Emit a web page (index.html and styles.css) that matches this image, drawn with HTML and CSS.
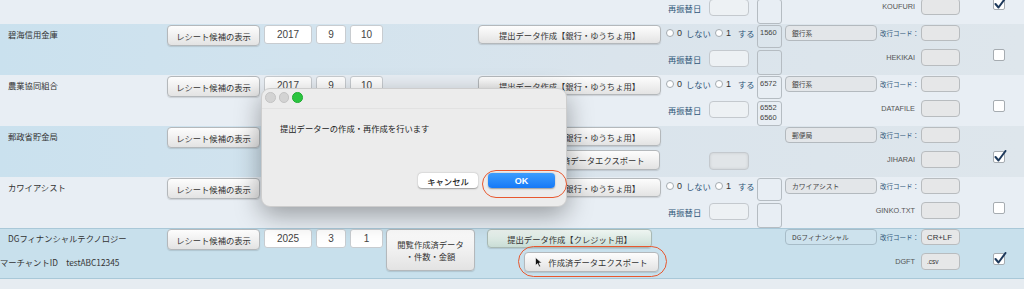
FILE: index.html
```html
<!doctype html>
<html lang="ja">
  <head>
    <meta charset="UTF-8" />
    <meta name="viewport" content="width=device-width, initial-scale=1.0" />
    <title>提出データ作成</title>
    <link rel="stylesheet" href="styles.css">
  </head>
  <body>
    <div class="sheet">

      <!-- 前の行（下半分のみ表示） -->
      <div class="record first">
        <div class="refund r2"><span class="refund-label">再振替日</span><span class="refund-field"></span></div>
        <div class="box r2"></div>
        <div class="fname r2">KOUFURI</div>
        <div class="code r2"></div>
        <div class="check r2 on"><svg viewBox="0 0 14 14"><path d="M2.5 7 L5.5 10.5 L12.5 1" /></svg></div>
      </div>

      <!-- 碧海信用金庫 -->
      <div class="record shade">
        <div class="name">碧海信用金庫</div>
        <button class="btn receipt">レシート候補の表示</button>
        <div class="field year">2017</div>
        <div class="field month">9</div>
        <div class="field day">10</div>
        <button class="btn submit">提出データ作成【銀行・ゆうちょ用】</button>
        <div class="radios">
          <span class="dot"></span><span class="num">0</span><span>しない</span>
          <span class="dot"></span><span class="num">1</span><span class="wide">する</span>
        </div>
        <div class="box">1560</div>
        <div class="cat">銀行系</div>
        <div class="crlf-label">改行コード：</div>
        <div class="code"></div>

        <div class="refund r2"><span class="refund-label">再振替日</span><span class="refund-field"></span></div>
        <div class="box r2"></div>
        <div class="fname r2">HEKIKAI</div>
        <div class="code r2"></div>
        <div class="check r2"></div>
      </div>

      <!-- 農業協同組合 -->
      <div class="record">
        <div class="name">農業協同組合</div>
        <button class="btn receipt">レシート候補の表示</button>
        <div class="field year">2017</div>
        <div class="field month">9</div>
        <div class="field day">10</div>
        <button class="btn submit">提出データ作成【銀行・ゆうちょ用】</button>
        <div class="radios">
          <span class="dot"></span><span class="num">0</span><span>しない</span>
          <span class="dot"></span><span class="num">1</span><span class="wide">する</span>
        </div>
        <div class="box">6572</div>
        <div class="cat">銀行系</div>
        <div class="crlf-label">改行コード：</div>
        <div class="code"></div>

        <div class="refund r2"><span class="refund-label">再振替日</span><span class="refund-field"></span></div>
        <div class="box r2">6552<br>6560</div>
        <div class="fname r2">DATAFILE</div>
        <div class="code r2"></div>
        <div class="check r2"></div>
      </div>

      <!-- 郵政省貯金局 -->
      <div class="record shade">
        <div class="name">郵政省貯金局</div>
        <button class="btn receipt">レシート候補の表示</button>
        <button class="btn submit">提出データ作成【銀行・ゆうちょ用】</button>
        <div class="cat">郵便局</div>
        <div class="crlf-label">改行コード：</div>
        <div class="code"></div>

        <button class="btn export plain r2">作成済データエクスポート</button>
        <div class="refund r2"><span class="refund-field blank"></span></div>
        <div class="fname r2">JIHARAI</div>
        <div class="code r2"></div>
        <div class="check r2 on"><svg viewBox="0 0 14 14"><path d="M2.5 7 L5.5 10.5 L12.5 1" /></svg></div>
      </div>

      <!-- カワイアシスト -->
      <div class="record">
        <div class="name">カワイアシスト</div>
        <button class="btn receipt">レシート候補の表示</button>
        <button class="btn submit">提出データ作成【銀行・ゆうちょ用】</button>
        <div class="radios">
          <span class="dot"></span><span class="num">0</span><span>しない</span>
          <span class="dot"></span><span class="num">1</span><span class="wide">する</span>
        </div>
        <div class="box"></div>
        <div class="cat">カワイアシスト</div>
        <div class="crlf-label">改行コード：</div>
        <div class="code"></div>

        <div class="refund r2"><span class="refund-label">再振替日</span><span class="refund-field"></span></div>
        <div class="box r2"></div>
        <div class="fname r2">GINKO.TXT</div>
        <div class="code r2"></div>
        <div class="check r2"></div>
      </div>

      <!-- DGフィナンシャルテクノロジー -->
      <div class="record credit">
        <div class="name">DGフィナンシャルテクノロジー</div>
        <div class="merchant r2">マーチャントID　testABC12345</div>
        <button class="btn receipt">レシート候補の表示</button>
        <div class="field year">2025</div>
        <div class="field month">3</div>
        <div class="field day">1</div>
        <button class="btn view">閲覧作成済データ<br>・件数・金額</button>
        <button class="btn submit card">提出データ作成【クレジット用】</button>
        <div class="cat blue">DGフィナンシャル</div>
        <div class="crlf-label">改行コード：</div>
        <div class="code">CR+LF</div>

        <button class="btn export r2">
          <svg class="cursor" viewBox="0 0 8 11"><path d="M0.5 0.5 L0.5 8.5 L2.6 6.6 L4.1 10 L5.5 9.3 L4 6 L6.8 6 Z" /></svg>
          作成済データエクスポート
        </button>
        <div class="fname r2">DGFT</div>
        <div class="code r2 small">.csv</div>
        <div class="check r2 on"><svg viewBox="0 0 14 14"><path d="M2.5 7 L5.5 10.5 L12.5 1" /></svg></div>
      </div>

      <div class="footer"></div>

      <!-- 確認ダイアログ -->
      <div class="dialog">
        <div class="titlebar">
          <span class="light"></span>
          <span class="light"></span>
          <span class="light green"></span>
        </div>
        <p class="message">提出データーの作成・再作成を行います</p>
        <div class="actions">
          <button class="dlg-btn">キャンセル</button>
          <button class="dlg-btn ok">OK</button>
        </div>
      </div>

      <!-- 注目の赤丸 -->
      <div class="mark mark-ok"></div>
      <div class="mark mark-export"></div>
    </div>
  </body>
</html>
```

FILE: styles.css
```css
body {
  margin: 0;
  overflow: hidden;
  background-color: #e7edf2;
  font-family: "Noto Sans CJK JP", "Liberation Sans", sans-serif;
  color: #333;
}
.sheet {
  display: flow-root;
  position: relative;
  width: 1024px;
}
.record {
  display: grid;
  grid-template-columns: 167px 97px 52px 34px 36px 92px 186px 93px 28px 93px 43px 72px 31px;
  grid-template-rows: 25px 26px;
  align-items: start;
  background-color: #e8eef4;
}
.record.first {
  margin-top: -27px;
}
.record.shade {
  background: linear-gradient(90deg, #cae1ee 0%, #d2e3ee 30%, #dae4ec 60%, #dee6ec 100%);
}
.record.credit {
  background-color: #c8e0ec;
  box-shadow: inset 0 1px #a9c8d8, inset 0 -1px #a9c8d8;
}
.r2 {
  grid-row: 2;
}
.footer {
  height: 20px;
  background-color: #e6ecf1;
}

/* 左の名前 */
.name {
  grid-column: 1;
  grid-row: 1;
  padding: 4px 0 0 8px;
  font-size: 8.3px;
  line-height: 12px;
  color: #333;
  white-space: nowrap;
}
.merchant {
  grid-column: 1 / 3;
  padding-top: 3px;
  font-size: 8.3px;
  line-height: 12px;
  white-space: nowrap;
}

/* ボタン */
.btn {
  box-sizing: border-box;
  display: flex;
  align-items: center;
  justify-content: center;
  padding: 0;
  border: 1px solid #b4b8bb;
  border-radius: 4px;
  background: linear-gradient(#fdfdfd, #efefef 55%, #e3e3e3);
  box-shadow: 0 1px 1px rgba(0, 0, 0, 0.12);
  font-family: "Noto Sans CJK JP", sans-serif;
  font-size: 8.3px;
  line-height: 12px;
  color: #333;
  white-space: nowrap;
}
.receipt {
  grid-column: 2;
  grid-row: 1;
  width: 93px;
  height: 21px;
  margin-top: 1px;
}
.submit {
  grid-column: 7;
  grid-row: 1;
  width: 183px;
  height: 19px;
  margin-top: 1px;
}
.submit.card {
  width: 165px;
  margin-left: 9px;
  background: linear-gradient(#eef5f1, #dbe9e3 55%, #c9ddd5);
  border-color: #a9b9b4;
}
.view {
  grid-column: 6;
  grid-row: 1 / 3;
  width: 89px;
  height: 42px;
  margin-top: 1px;
}
.export {
  grid-column: 7;
  width: 135px;
  height: 20px;
  margin-top: -1px;
  margin-left: 46px;
  gap: 5px;
}
.export.plain {
  width: 130px;
  margin-left: 52px;
}
.cursor {
  width: 8px;
  height: 11px;
}
.cursor path {
  fill: #111;
  stroke: #fff;
  stroke-width: 0.6;
}

/* 日付 */
.field {
  box-sizing: border-box;
  display: flex;
  align-items: center;
  justify-content: center;
  height: 19px;
  margin-top: 1px;
  background-color: #fff;
  border: 1px solid #c8ccd0;
  border-radius: 3px;
  font-family: "Liberation Sans", sans-serif;
  font-size: 10px;
  color: #444;
}
.year {
  grid-column: 3;
  width: 48px;
}
.month {
  grid-column: 4;
  width: 30px;
}
.day {
  grid-column: 5;
  width: 33px;
}

/* ラジオ */
.radios {
  grid-column: 8;
  grid-row: 1;
  display: flex;
  align-items: center;
  margin-top: 3px;
  padding-left: 2px;
  height: 12px;
  font-size: 8.3px;
  color: #2f5678;
  white-space: nowrap;
}
.dot {
  box-sizing: border-box;
  width: 8px;
  height: 8px;
  border: 1px solid #a3aab0;
  border-radius: 50%;
  background-color: #fff;
  margin-right: 3px;
}
.num {
  font-family: "Liberation Sans", sans-serif;
  font-size: 9px;
  color: #333;
  margin-right: 4px;
}
.radios span:nth-child(3) {
  margin-right: 4px;
}
.wide {
  margin-left: 3px;
}

/* 番号の枠 */
.box {
  grid-column: 9;
  grid-row: 1;
  box-sizing: border-box;
  width: 25px;
  height: 23px;
  margin-top: 1px;
  padding: 2px 0 0 2px;
  border: 1px solid #b5bcc2;
  border-radius: 3px;
  font-family: "Liberation Sans", sans-serif;
  font-size: 7.5px;
  line-height: 10px;
  color: #444;
}
.box.r2 {
  grid-row: 2;
  height: 25px;
  padding-top: 1px;
}

/* 種別 */
.cat {
  grid-column: 10;
  grid-row: 1;
  box-sizing: border-box;
  display: flex;
  align-items: center;
  width: 92px;
  height: 16px;
  margin-top: 1px;
  padding-left: 6px;
  border: 1px solid #b3b9be;
  border-radius: 4px;
  background-color: #e3e6e9;
  font-size: 6.8px;
  color: #444;
  white-space: nowrap;
}
.cat.blue {
  background-color: #cde2ed;
  border-color: #a7bcc8;
}
.crlf-label {
  grid-column: 11;
  grid-row: 1;
  margin-top: 4px;
  padding-left: 2px;
  font-size: 6.5px;
  line-height: 10px;
  color: #2f5678;
  white-space: nowrap;
}
.code {
  grid-column: 12;
  grid-row: 1;
  box-sizing: border-box;
  display: flex;
  align-items: center;
  width: 39px;
  height: 16px;
  margin-top: 1px;
  padding-left: 5px;
  border: 1px solid #b8bcbf;
  border-radius: 4px;
  background-color: #e6e7e8;
  font-family: "Liberation Sans", sans-serif;
  font-size: 7.8px;
  color: #333;
}
.code.r2 {
  grid-row: 2;
  height: 17px;
  margin-top: 0;
}
.code.small {
  font-size: 6.5px;
}
.fname {
  grid-column: 10 / 12;
  text-align: right;
  padding-right: 6px;
  margin-top: 4px;
  font-family: "Liberation Sans", sans-serif;
  font-size: 7.3px;
  line-height: 10px;
  color: #555;
}

/* 再振替日 */
.refund {
  grid-column: 8;
  display: flex;
  align-items: center;
  margin-top: 1px;
  height: 17px;
}
.refund-label {
  padding-left: 4px;
  width: 41px;
  font-size: 8.3px;
  color: #2f5678;
  white-space: nowrap;
}
.refund-field {
  box-sizing: border-box;
  width: 40px;
  height: 17px;
  border: 1px solid #c4c9ce;
  border-radius: 4px;
  background-color: #edf1f4;
}
.refund-field.blank {
  margin-left: 45px;
  height: 18px;
  background-color: #e1e5e8;
  box-shadow: inset 0 0 3px rgba(0, 0, 0, 0.12);
}

/* チェック */
.check {
  grid-column: 13;
  position: relative;
  box-sizing: border-box;
  width: 12px;
  height: 12px;
  border: 1px solid #a6acb1;
  border-radius: 2px;
  background-color: #fff;
}
.check svg {
  position: absolute;
  left: -1px;
  top: -2px;
  width: 14px;
  height: 14px;
}
.check path {
  fill: none;
  stroke: #1e3a5c;
  stroke-width: 2;
  stroke-linecap: round;
  stroke-linejoin: round;
}

/* ダイアログ */
.dialog {
  position: absolute;
  left: 261px;
  top: 88px;
  width: 306px;
  height: 119px;
  box-sizing: border-box;
  background-color: #ececec;
  border: 1px solid #cdcdcd;
  border-radius: 9px;
  box-shadow: 0 8px 26px rgba(0, 0, 0, 0.35);
}
.titlebar {
  display: flex;
  gap: 3px;
  height: 16px;
  padding: 3px 0 0 3px;
  border-bottom: 1px solid #e2e2e2;
}
.light {
  box-sizing: border-box;
  width: 10.5px;
  height: 10.5px;
  border-radius: 50%;
  background-color: #d3d3d3;
  border: 1px solid #c4c4c4;
}
.light.green {
  background-color: #2ac43f;
  border-color: #22ad35;
}
.message {
  margin: 0;
  padding: 13px 0 0 18px;
  font-size: 8.3px;
  line-height: 12px;
  color: #222;
}
.actions {
  display: flex;
  justify-content: flex-end;
  gap: 10px;
  padding: 39px 11px 0 0;
}
.dlg-btn {
  box-sizing: border-box;
  height: 15px;
  width: 60px;
  padding: 0;
  border: none;
  border-radius: 4px;
  background-color: #fff;
  box-shadow: 0 0.5px 1.5px rgba(0, 0, 0, 0.35);
  font-family: "Noto Sans CJK JP", sans-serif;
  font-size: 8.3px;
  font-weight: 500;
  color: #222;
}
.dlg-btn.ok {
  width: 67px;
  background: linear-gradient(#3d9dfd, #1679f7);
  color: #fff;
  font-family: "Liberation Sans", sans-serif;
  font-size: 9px;
  font-weight: bold;
}

/* 赤丸 */
.mark {
  position: absolute;
  box-sizing: border-box;
  border: 1.5px solid #e8582f;
  border-radius: 16px;
}
.mark-ok {
  left: 482px;
  top: 170px;
  width: 85px;
  height: 28px;
}
.mark-export {
  left: 518px;
  top: 246px;
  width: 149px;
  height: 31px;
}
```
